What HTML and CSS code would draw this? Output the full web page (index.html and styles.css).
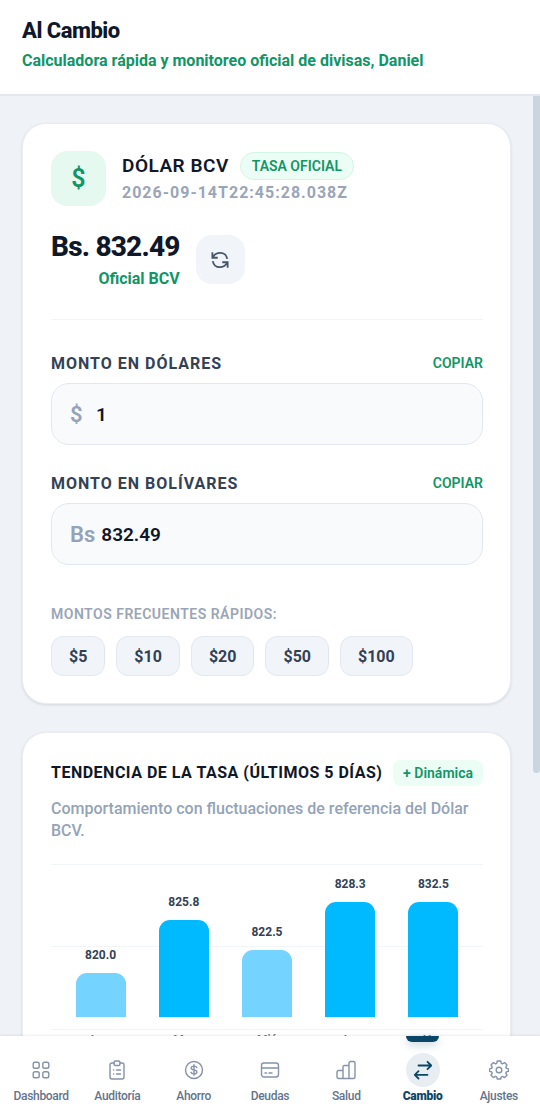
FILE: index.html
```html
<!DOCTYPE html>
<html lang="es">
<head>
<meta charset="utf-8">
<meta name="viewport" content="width=device-width, initial-scale=1">
<title>Al Cambio</title>
<link rel="stylesheet" href="styles.css">
</head>
<body>
<div class="app">
  <header class="header">
    <h1 class="header-title">Al Cambio</h1>
    <p class="header-subtitle">Calculadora rápida y monitoreo oficial de divisas, Daniel</p>
  </header>

  <div class="viewport">
  <main class="content">
    <section class="card">
      <div class="rate-head">
        <div class="rate-icon">$</div>
        <div class="rate-info">
          <div class="rate-name-row">
            <h2 class="rate-name">DÓLAR BCV</h2>
            <span class="badge-official">TASA OFICIAL</span>
          </div>
          <p class="rate-date">2026-09-14T22:45:28.038Z</p>
        </div>
      </div>
      <div class="price-row">
        <div class="price">
          <p class="price-value">Bs. 832.49</p>
          <p class="price-source">Oficial BCV</p>
        </div>
        <button class="refresh" type="button" aria-label="Actualizar">
          <svg width="18" height="18" viewBox="0 0 20 20" fill="none" stroke="currentColor" stroke-width="2"><path d="M1.500 1.500v6h6M2 7C3.600 3.800 6.700 2 10.300 2c4 0 7.100 2.800 7.700 6.800M18.500 18.500v-6h-6M18 13C16.400 16.200 13.300 18 9.700 18c-4 0-7.100-2.800-7.700-6.800"/></svg>
        </button>
      </div>

      <div class="fields">
        <div class="field">
          <div class="field-head">
            <label class="field-label" for="usd">MONTO EN DÓLARES</label>
            <button class="copy" type="button">COPIAR</button>
          </div>
          <div class="field-box">
            <span class="field-prefix">$</span>
            <input class="field-input" id="usd" type="text" value="1">
          </div>
        </div>
        <div class="field">
          <div class="field-head">
            <label class="field-label" for="ves">MONTO EN BOLÍVARES</label>
            <button class="copy" type="button">COPIAR</button>
          </div>
          <div class="field-box">
            <span class="field-prefix">Bs</span>
            <input class="field-input" id="ves" type="text" value="832.49">
          </div>
        </div>
      </div>

      <p class="quick-label">MONTOS FRECUENTES RÁPIDOS:</p>
      <div class="quick">
        <button class="quick-button" type="button">$5</button>
        <button class="quick-button" type="button">$10</button>
        <button class="quick-button" type="button">$20</button>
        <button class="quick-button" type="button">$50</button>
        <button class="quick-button" type="button">$100</button>
      </div>
    </section>

    <section class="card">
      <div class="trend-head">
        <h2 class="trend-title">TENDENCIA DE LA TASA (ÚLTIMOS 5 DÍAS)</h2>
        <span class="badge-trend">+ Dinámica</span>
      </div>
      <p class="trend-text">Comportamiento con fluctuaciones de referencia del Dólar BCV.</p>
      <div class="chart">
        <div class="plot">
          <div class="column"><span class="value">820.0</span><div class="bar bar-low" style="height:44px"></div></div>
          <div class="column"><span class="value">825.8</span><div class="bar" style="height:97px"></div></div>
          <div class="column"><span class="value">822.5</span><div class="bar bar-low" style="height:67px"></div></div>
          <div class="column"><span class="value">828.3</span><div class="bar" style="height:115px"></div></div>
          <div class="column"><span class="value">832.5</span><div class="bar" style="height:115px"></div></div>
        </div>
        <div class="days"><span>Lun</span><span>Mar</span><span>Mié</span><span>Jue</span><span>Hoy</span></div>
      </div>
    </section>
  </main>
  <div class="scroll-track"><div class="scroll-thumb"></div></div>
  </div>

  <nav class="nav">
    <a class="nav-item" href="#dashboard">
      <span class="nav-icon"><svg width="20" height="20" viewBox="0 0 20 20" fill="none" stroke="currentColor" stroke-width="1.400"><rect x="2.200" y="2.200" width="6" height="6" rx="1.800"/><rect x="11.800" y="2.200" width="6" height="6" rx="1.800"/><rect x="2.200" y="11.800" width="6" height="6" rx="1.800"/><rect x="11.800" y="11.800" width="6" height="6" rx="1.800"/></svg></span>
      <span>Dashboard</span>
    </a>
    <a class="nav-item" href="#auditoria">
      <span class="nav-icon"><svg width="20" height="20" viewBox="0 0 20 20" fill="none" stroke="currentColor" stroke-width="1.400" stroke-linecap="round"><path d="M7 3H5a2 2 0 0 0-2 2v12a2 2 0 0 0 2 2h10a2 2 0 0 0 2-2V5a2 2 0 0 0-2-2h-2"/><path d="M7 2.500A1.500 1.500 0 0 1 8.500 1h3A1.500 1.500 0 0 1 13 2.500V4a1.500 1.500 0 0 1-1.500 1.500h-3A1.500 1.500 0 0 1 7 4z"/><path d="M6.500 10h.2M9.500 10h4M6.500 14h.2M9.500 14h4"/></svg></span>
      <span>Auditoría</span>
    </a>
    <a class="nav-item" href="#ahorro">
      <span class="nav-icon"><svg width="20" height="20" viewBox="0 0 20 20" fill="none" stroke="currentColor" stroke-width="1.400" stroke-linecap="round"><circle cx="10" cy="10" r="8.500"/><path d="M10 4.800v10.400M12.800 7.600c-.3-1-1.300-1.500-2.800-1.500s-2.800.6-2.800 1.900c0 2.800 5.700 1.200 5.700 4 0 1.300-1.300 1.900-2.900 1.900s-2.700-.6-3-1.600"/></svg></span>
      <span>Ahorro</span>
    </a>
    <a class="nav-item" href="#deudas">
      <span class="nav-icon"><svg width="20" height="20" viewBox="0 0 20 20" fill="none" stroke="currentColor" stroke-width="1.400" stroke-linecap="round"><rect x="1.500" y="3" width="17" height="14" rx="2.500"/><path d="M1.500 8h17M5 13h1.500M9 13h3"/></svg></span>
      <span>Deudas</span>
    </a>
    <a class="nav-item" href="#salud">
      <span class="nav-icon"><svg width="20" height="20" viewBox="0 0 20 20" fill="none" stroke="currentColor" stroke-width="1.400" stroke-linejoin="round"><path d="M7 18.500H2.500a1.500 1.500 0 0 1-1.500-1.500v-5a1.500 1.500 0 0 1 1.500-1.500H7zM7 7a1.500 1.500 0 0 1 1.500-1.500H13v13H7zM13 3a1.500 1.500 0 0 1 1.500-1.500h3A1.500 1.500 0 0 1 19 3v14a1.500 1.500 0 0 1-1.500 1.500H13z"/></svg></span>
      <span>Salud</span>
    </a>
    <a class="nav-item nav-active" href="#cambio" aria-current="page">
      <span class="nav-icon"><svg width="20" height="20" viewBox="0 0 20 20" fill="none" stroke="currentColor" stroke-width="1.800" stroke-linecap="round" stroke-linejoin="round"><path d="M5.500 5.500h12.500M14.500 1.800l3.700 3.700-3.700 3.700M14.500 14.800H2M5.500 11.100l-3.700 3.700 3.700 3.700"/></svg></span>
      <span>Cambio</span>
    </a>
    <a class="nav-item" href="#ajustes">
      <span class="nav-icon"><svg width="20" height="20" viewBox="0 0 20 20" fill="none" stroke="currentColor" stroke-width="1.400" stroke-linejoin="round"><path d="M8.300 1h3.400l.6 2.300 1.200.5 2.100-1.200 2.400 2.400-1.200 2.100.5 1.200 2.300.6v2.400l-2.300.6-.5 1.200 1.200 2.100-2.400 2.400-2.100-1.200-1.200.5-.6 2.100H8.300l-.6-2.100-1.200-.5-2.100 1.200L2 15.200l1.200-2.100-.5-1.200-2.300-.6V8.900l2.300-.6.5-1.200L2 5l2.400-2.400 2.100 1.200 1.200-.5z"/><circle cx="10" cy="10" r="2.800"/></svg></span>
      <span>Ajustes</span>
    </a>
  </nav>
</div>
</body>
</html>
```
FILE: styles.css
```css
* {
  box-sizing: border-box;
}

body,
h1,
h2,
p {
  margin: 0;
}

body {
  font-family: Roboto, "Liberation Sans", sans-serif;
  color: #0f172a;
  background: #eff3f8;
}

button,
input {
  font: inherit;
  color: inherit;
}

button {
  cursor: pointer;
}

.app {
  display: flex;
  flex-direction: column;
  height: 100vh;
}

.header {
  padding: 16px 22px 21px;
  border-bottom: 2px solid #e2e8ec;
  background: #fff;
}

.header-title {
  font-size: 22px;
  line-height: 30px;
  font-weight: 800;
  letter-spacing: -0.5px;
}

.header-subtitle {
  margin-top: 3px;
  font-size: 16px;
  line-height: 24px;
  font-weight: 700;
  color: #109666;
}

.viewport {
  flex: 1;
  min-height: 0;
  display: flex;
}

.content {
  flex: 1;
  min-width: 0;
  display: flex;
  flex-direction: column;
  gap: 28px;
  padding: 27px 22px 160px;
  overflow-y: auto;
  scrollbar-width: none;
}

.scroll-track {
  flex: none;
  width: 7px;
}

.scroll-thumb {
  height: 72%;
  border-radius: 0 0 4px 4px;
  background: #cbd5df;
}

.card {
  flex: none;
  padding: 27px 27px 27px 28px;
  border: 1px solid #e9edf2;
  border-radius: 24px;
  background: #fff;
  box-shadow: 0 1px 3px rgba(15, 23, 42, 0.12);
}

.rate-head {
  display: flex;
  align-items: center;
  gap: 16px;
}

.rate-icon {
  display: grid;
  place-items: center;
  width: 55px;
  height: 55px;
  border-radius: 16px;
  background: #e6f9f1;
  color: #109666;
  font-size: 25px;
  font-weight: 600;
}

.rate-name-row {
  display: flex;
  align-items: center;
  gap: 11px;
}

.rate-name {
  font-size: 19px;
  line-height: 28px;
  font-weight: 600;
  letter-spacing: 0.5px;
}

.badge-official {
  padding: 0 11px;
  border: 1px solid #d1f7e4;
  border-radius: 14px;
  background: #ecfdf5;
  color: #109666;
  font-size: 14px;
  line-height: 26px;
  font-weight: 600;
}

.rate-date {
  font-size: 16px;
  line-height: 26px;
  font-weight: 700;
  letter-spacing: 1px;
  color: #9aa5b8;
}

.price-row {
  display: flex;
  align-items: center;
  gap: 16px;
  padding: 21px 0 27px;
  border-bottom: 1px solid #f1f5f9;
}

.price {
  text-align: right;
}

.price-value {
  font-size: 28px;
  line-height: 39px;
  font-weight: 800;
  letter-spacing: -0.8px;
}

.price-source {
  font-size: 16px;
  line-height: 26px;
  font-weight: 700;
  color: #109666;
}

.refresh {
  display: grid;
  place-items: center;
  width: 49px;
  height: 49px;
  padding: 0;
  border: 0;
  border-radius: 16px;
  background: #f1f5fa;
  color: #475569;
}

.fields {
  display: grid;
  gap: 26px;
  padding-top: 31px;
}

.field-head {
  display: flex;
  align-items: center;
  justify-content: space-between;
  height: 24px;
  margin-bottom: 8px;
}

.field-label {
  font-size: 16px;
  font-weight: 700;
  letter-spacing: 1px;
  color: #334155;
}

.copy {
  padding: 0;
  border: 0;
  background: none;
  color: #109666;
  font-size: 14px;
  font-weight: 600;
}

.field-box {
  display: flex;
  align-items: center;
  height: 62px;
  padding: 0 18px;
  border: 1px solid #e2e8f0;
  border-radius: 18px;
  background: #f8fafc;
}

.field-prefix {
  flex: none;
  min-width: 20px;
  font-size: 22px;
  font-weight: 600;
  color: #94a3b8;
}

.field-input {
  flex: 1;
  min-width: 0;
  padding: 0 6px;
  border: 0;
  outline: 0;
  background: none;
  font-size: 19px;
  font-weight: 600;
}

.quick-label {
  margin-top: 38px;
  font-size: 14px;
  line-height: 22px;
  font-weight: 600;
  letter-spacing: 0.5px;
  color: #9aa5b8;
}

.quick {
  display: flex;
  flex-wrap: wrap;
  gap: 11px;
  margin-top: 11px;
}

.quick-button {
  height: 40px;
  padding: 0 17px;
  border: 1px solid #e2e8f0;
  border-radius: 12px;
  background: #f1f5f9;
  color: #334155;
  font-size: 16px;
  font-weight: 700;
}

.trend-head {
  display: flex;
  align-items: center;
  justify-content: space-between;
}

.trend-title {
  font-size: 16px;
  line-height: 26px;
  font-weight: 700;
  letter-spacing: 0.5px;
}

.badge-trend {
  flex: none;
  padding: 0 10px;
  border-radius: 8px;
  background: #ecfdf5;
  color: #109666;
  font-size: 14px;
  line-height: 26px;
  font-weight: 600;
}

.trend-text {
  margin-top: 12px;
  font-size: 16px;
  line-height: 22px;
  font-weight: 500;
  color: #94a3b8;
}

.chart {
  margin-top: 22px;
}

.plot {
  display: flex;
  align-items: flex-end;
  height: 166px;
  padding: 0 8px 12px;
  border-top: 1px solid #f1f5f9;
  border-bottom: 1px solid #f1f5f9;
  background: linear-gradient(#f1f5f9, #f1f5f9) 0 81px / 100% 1px no-repeat;
}

.column {
  flex: 1;
  display: flex;
  flex-direction: column;
  align-items: center;
  gap: 10px;
}

.value {
  font-size: 12px;
  line-height: 16px;
  font-weight: 700;
  color: #334155;
}

.bar {
  width: 60%;
  border-radius: 11px 11px 0 0;
  background: #00baff;
}

.bar-low {
  background: #74d3ff;
}

.days {
  display: flex;
  padding: 1px 8px 0;
  font-size: 12px;
  line-height: 18px;
  font-weight: 600;
  color: #64748b;
}

.days span {
  flex: 1;
  text-align: center;
}

.nav {
  display: flex;
  height: 82px;
  padding: 0 3px;
  background: #fff;
  box-shadow: 0 -1px 2px rgba(15, 23, 42, 0.08);
}

.nav-item {
  position: relative;
  flex: 1 1 0;
  display: flex;
  flex-direction: column;
  align-items: center;
  padding-top: 17px;
  color: #64748b;
  font-size: 12px;
  line-height: 18px;
  font-weight: 500;
  letter-spacing: -0.3px;
  text-decoration: none;
}

.nav-icon {
  display: grid;
  place-items: center;
  width: 34px;
  height: 34px;
  border-radius: 50%;
  color: #8592a8;
}

.nav-active {
  color: #0b4666;
  font-weight: 900;
}

.nav-active .nav-icon {
  background: #e7edf1;
  color: #0b4666;
}

.nav-active::before {
  content: "";
  position: absolute;
  top: 0;
  width: 33px;
  height: 6px;
  border-radius: 0 0 6px 6px;
  background: #0b4666;
  box-shadow: 0 3px 8px rgba(11, 70, 102, 0.25);
}
```
